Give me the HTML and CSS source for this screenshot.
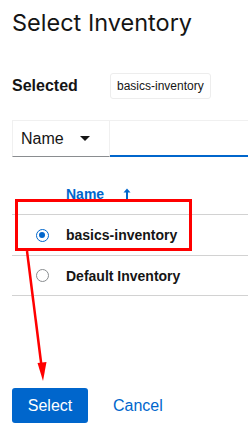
FILE: index.html
```html
<!DOCTYPE html>
<html lang="en">
<head>
    <meta charset="UTF-8">
    <meta name="viewport" content="width=device-width, initial-scale=1.0">
    <title>Select Inventory</title>
    <link rel="stylesheet" href="styles.css">
</head>
<body>
    <div class="modal">
        <h1>Select Inventory</h1>

        <div class="selected">
            <span class="selected-label">Selected</span>
            <span class="chip">basics-inventory</span>
        </div>

        <div class="toolbar">
            <div class="filter">
                <span>Name</span>
                <span class="caret"></span>
            </div>
            <div class="search"></div>
        </div>

        <div class="table">
            <div class="thead">
                <span class="th">Name</span>
                <svg class="sort" width="8" height="12" viewBox="0 0 8 12">
                    <path d="M4 0.5 L7.5 4.5 L5 4.5 L5 11.5 L3 11.5 L3 4.5 L0.5 4.5 Z" fill="#0066cc"/>
                </svg>
            </div>
            <div class="row">
                <span class="radio checked"></span>
                <span class="cell">basics-inventory</span>
            </div>
            <div class="row">
                <span class="radio"></span>
                <span class="cell">Default Inventory</span>
            </div>
        </div>

        <div class="actions">
            <button class="btn-primary">Select</button>
            <button class="btn-link">Cancel</button>
        </div>
    </div>

    <!-- annotation drawn over the screenshot -->
    <svg class="annotation" width="248" height="440" viewBox="0 0 248 440">
        <rect x="16.5" y="200.5" width="174" height="49" fill="none" stroke="#ff0000" stroke-width="3"/>
        <line x1="27" y1="251" x2="41.5" y2="366" stroke="#ff0000" stroke-width="2.5"/>
        <polygon points="37.5,363 46.5,362 43,381" fill="#ff0000"/>
    </svg>
</body>
</html>
```

FILE: styles.css
```css
* {
    margin: 0;
    padding: 0;
    box-sizing: border-box;
}

body {
    font-family: "Liberation Sans", Arial, sans-serif;
    background: #fff;
    color: #151515;
    overflow: hidden;
}

.modal {
    padding: 8px 0 0 12px;
}

h1 {
    font-family: Inter, "Open Sans", sans-serif;
    font-weight: 400;
    font-size: 23.5px;
    line-height: 30px;
    color: #151515;
}

.selected {
    display: flex;
    align-items: center;
    margin-top: 35px;
}

.selected-label {
    font-weight: bold;
    font-size: 16px;
    width: 98px;
}

.chip {
    font-size: 12px;
    color: #151515;
    border: 1px solid #ededed;
    border-radius: 3px;
    padding: 5px 6px;
    line-height: 14px;
}

.toolbar {
    display: flex;
    margin-top: 21px;
    height: 37px;
}

.filter {
    width: 98px;
    display: flex;
    align-items: center;
    justify-content: space-between;
    padding: 0 19px 0 8px;
    border: 1px solid #f0f0f0;
    border-bottom: 1px solid #8a8d90;
    font-size: 16px;
    color: #151515;
}

.caret {
    width: 0;
    height: 0;
    border-left: 5px solid transparent;
    border-right: 5px solid transparent;
    border-top: 5px solid #151515;
}

.search {
    flex: 1;
    border-top: 1px solid #f0f0f0;
    border-bottom: 2px solid #0066cc;
}

.table {
    margin-top: 29px;
}

.thead {
    display: flex;
    align-items: center;
    height: 28px;
    padding: 0 0 12px 54px;
    font-size: 14px;
    font-weight: bold;
    color: #0066cc;
}

.sort {
    margin-left: 19px;
}

.row {
    display: flex;
    align-items: center;
    height: 41px;
    border-top: 1px solid #d2d2d2;
}

.row:last-child {
    border-bottom: 1px solid #d2d2d2;
}

.radio {
    width: 13px;
    height: 13px;
    border-radius: 50%;
    border: 1px solid #8a8d90;
    margin-left: 24px;
    margin-right: 17px;
    position: relative;
}

.radio.checked {
    border: 1.5px solid #0066cc;
}

.radio.checked::after {
    content: "";
    position: absolute;
    left: 2px;
    top: 2px;
    width: 6px;
    height: 6px;
    border-radius: 50%;
    background: #0066cc;
}

.cell {
    font-size: 14px;
    font-weight: bold;
    color: #151515;
}

.actions {
    display: flex;
    align-items: center;
    margin-top: 92px;
}

.btn-primary {
    width: 76px;
    height: 35px;
    background: #0066cc;
    color: #fff;
    border: none;
    border-radius: 3px;
    font-family: "Liberation Sans", Arial, sans-serif;
    font-size: 16px;
}

.btn-link {
    background: none;
    border: none;
    color: #0066cc;
    font-family: "Liberation Sans", Arial, sans-serif;
    font-size: 16px;
    margin-left: 25px;
}

.annotation {
    position: absolute;
    left: 0;
    top: 0;
    pointer-events: none;
}
```
